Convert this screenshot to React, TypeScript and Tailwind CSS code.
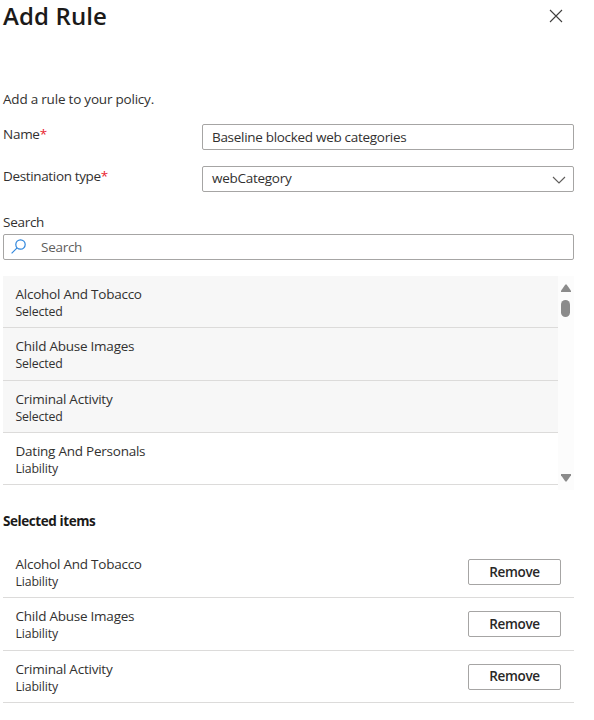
import React from "react";

type Item = { name: string; status: string };

const categories: Item[] = [
  { name: "Alcohol And Tobacco", status: "Selected" },
  { name: "Child Abuse Images", status: "Selected" },
  { name: "Criminal Activity", status: "Selected" },
  { name: "Dating And Personals", status: "Liability" },
];

const selected: string[] = ["Alcohol And Tobacco", "Child Abuse Images", "Criminal Activity"];

function Label({ item }: { item: Item }) {
  return (
    <div className="whitespace-nowrap">
      <div className="text-[13.5px] leading-[18px] tracking-[-0.24px]">{item.name}</div>
      <div className="text-[12.3px] leading-[17.6px] tracking-[-0.15px]">{item.status}</div>
    </div>
  );
}

function Required() {
  return <span className="text-[#e8232f]">*</span>;
}

export default function App() {
  return (
    <main className="h-[720px] w-[594px] overflow-hidden bg-white pl-[3px] font-['Open_Sans','Noto_Sans',sans-serif] text-[13.5px] tracking-[-0.27px] text-[#323130]">
      <header className="flex h-[89px] w-[571px] items-start justify-between">
        <h1 className="text-[24px] leading-[31px] font-semibold tracking-[0.12px] text-[#1b1a19]">Add Rule</h1>
        <button aria-label="Close" className="mt-[9px] mr-[11px]">
          <svg width="14" height="14" viewBox="0 0 14 14" fill="none" stroke="#403f3e" strokeWidth="1.1">
            <path d="M1 1l12 12M13 1L1 13" />
          </svg>
        </button>
      </header>
      <p className="h-[35px] leading-[20px] tracking-[-0.21px]">Add a rule to your policy.</p>
      <div className="flex h-[42px] w-[571px] justify-between">
        <label className="leading-[20px]">Name<Required /></label>
        <div className="flex h-[26px] w-[372px] items-center rounded-[2px] border border-[#a6a5a4] px-[9px] tracking-[-0.3px]">
          Baseline blocked web categories
        </div>
      </div>
      <div className="flex h-[46px] w-[571px] justify-between">
        <label className="leading-[20px] tracking-[-0.35px]">Destination type<Required /></label>
        <div className="flex h-[26px] w-[372px] items-center justify-between rounded-[2px] border border-[#a6a5a4] pr-[7px] pl-[9px]">
          <span className="-mt-0.5">webCategory</span>
          <svg className="mt-[1px]" width="14" height="8" viewBox="0 0 14 8" fill="none" stroke="#605e5c" strokeWidth="1.15">
            <path d="M1 1l6 6 6-6" />
          </svg>
        </div>
      </div>
      <label className="block h-[22px] leading-[20px]">Search</label>
      <div className="flex h-[26px] w-[571px] items-center rounded-[2px] border border-[#a6a5a4] pl-[7px] text-[#605e5c]">
        <svg className="-mt-0.5 mr-[15px]" width="15" height="15" viewBox="0 0 15 15" fill="none" stroke="#2f86dc" strokeWidth="1.2">
          <circle cx="9.5" cy="5.5" r="4.7" />
          <path d="M6.1 8.9L.6 14.4" />
        </svg>
        Search
      </div>
      <section className="mt-4 flex h-[214px] w-[571px]">
        <div className="w-[555px]">
          {categories.map((c) => (
            <div
              key={c.name}
              className={
                c.status === "Selected"
                  ? "h-[52.3px] border-b border-[#dcdbda] bg-[#f7f7f7] pt-[9px] pl-[12.5px]"
                  : "h-[52.3px] border-b border-[#dcdbda] pt-[9px] pl-[12.5px]"
              }
            >
              <Label item={c} />
            </div>
          ))}
        </div>
        <div className="flex w-4 flex-col items-center bg-[#fcfcfc] pt-2 pr-px">
          <svg width="10" height="8" viewBox="0 0 10 8" fill="#8b8b8b"><path d="M4.4.5h1.2L10 6.8V8H0V6.8z" /></svg>
          <div className="mt-2 h-[17px] w-[9px] rounded-full bg-[#8b8b8b]" />
          <svg className="mt-auto mb-2" width="10" height="8" viewBox="0 0 10 8" fill="#8b8b8b"><path d="M0 0h10v1.2L5.6 7.5H4.4L0 1.2z" /></svg>
        </div>
      </section>
      <h2 className="mt-[21px] leading-5 font-bold tracking-[-0.42px] text-[#1b1a19]">Selected items</h2>
      <div className="mt-[15px] w-[571px]">
        {selected.map((s) => (
          <div key={s} className="flex h-[52.3px] items-start justify-between border-b border-[#dcdbda] pt-[9px] pr-[13px] pl-[12.5px]">
            <Label item={{ name: s, status: "Liability" }} />
            <button className="mt-[4px] h-[26px] w-[93px] rounded-[2px] border border-[#a6a5a4] font-semibold tracking-[-0.3px] text-[#292827]">Remove</button>
          </div>
        ))}
      </div>
    </main>
  );
}
